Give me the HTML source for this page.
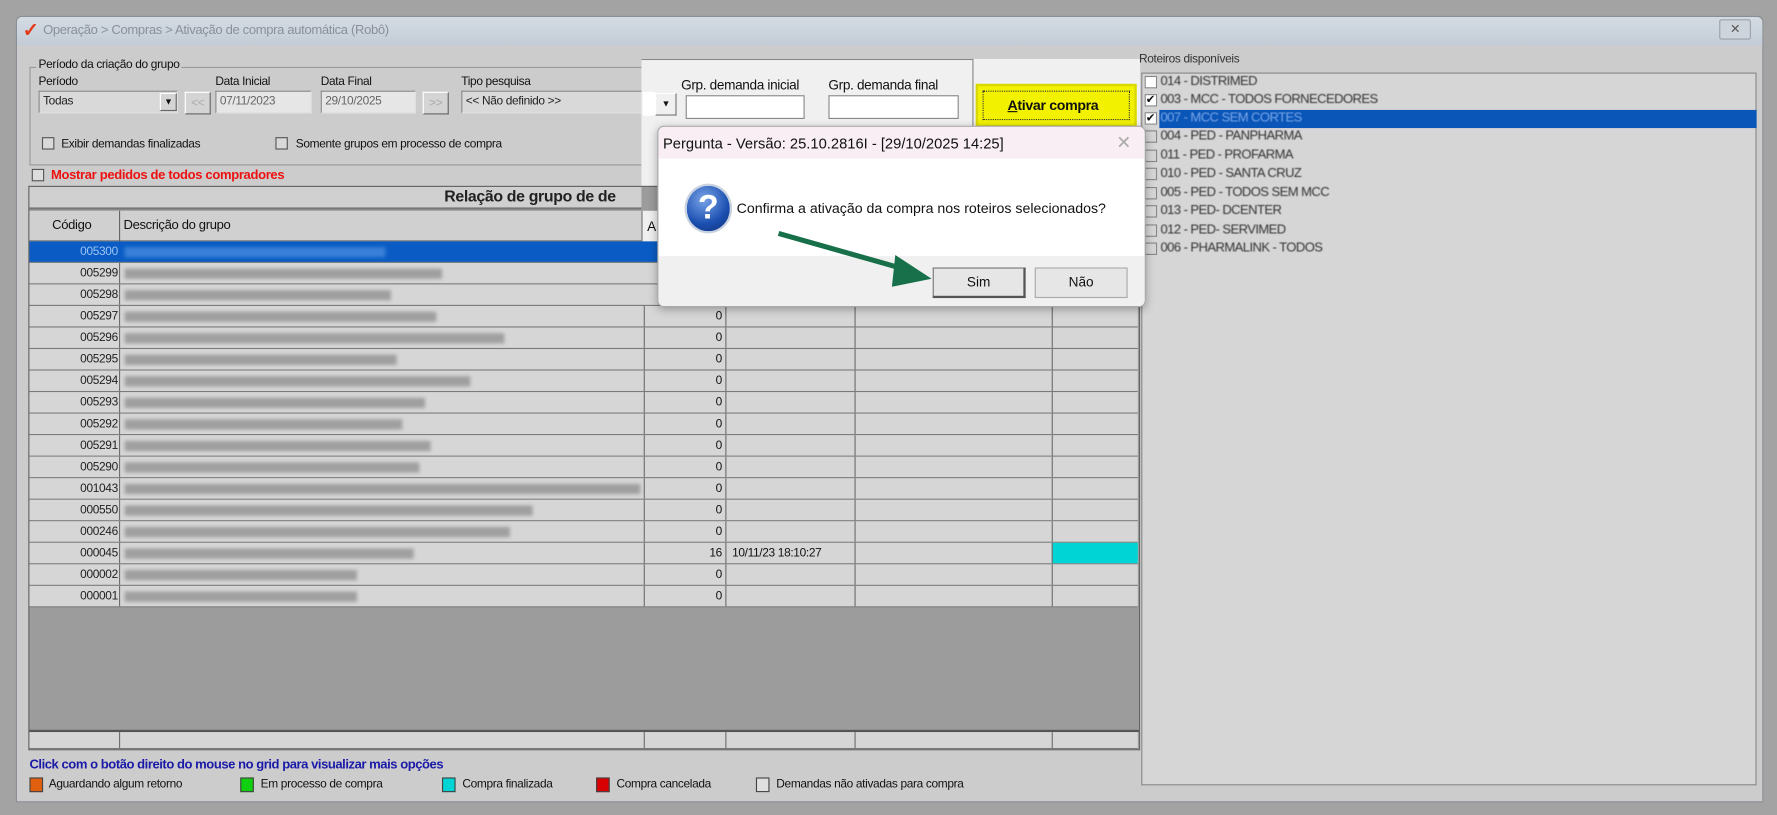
<!DOCTYPE html>
<html><head><meta charset="utf-8">
<style>
*{margin:0;padding:0;box-sizing:border-box}
body{width:1777px;height:815px;overflow:hidden;background:#a3a3a3;font-family:"Liberation Sans",sans-serif;}
#s{position:absolute;left:0;top:0;width:1568px;height:719px;transform:scale(1.13329);transform-origin:0 0;background:#a3a3a3;font-size:10.5px;letter-spacing:-0.3px;color:#111}
.a{position:absolute}
.win{left:14px;top:14px;width:1542px;height:694px;background:#cccccc;border:1px solid #8a8f96;border-radius:5px 5px 0 0}
.tb{left:15px;top:15px;width:1540px;height:25px;background:linear-gradient(#d4dbe3,#c3ccd6);border-radius:5px 5px 0 0}
.inp{background:#e6e6e6;border:1px solid #8a8a8a;border-right-color:#e0e0e0;border-bottom-color:#e0e0e0;height:20px;padding:2px 3px;color:#666}
.btn{background:#d4d4d4;border:1px solid #fff;border-right-color:#666;border-bottom-color:#666}
.cb{width:11px;height:11px;border:1px solid #555;background:#d9d9d9}
.row{position:absolute;left:26px;width:978px;height:19px;border-bottom:1px solid #7a7a7a;background:#d6d6d6}
.row .c{position:absolute;top:3px;left:0;width:78px;text-align:right;color:#222}
.row .b{position:absolute;top:5px;left:84px;height:9px;background:#888;filter:blur(1.6px);opacity:.7}
.row .n{position:absolute;top:3px;left:543px;width:68px;text-align:right}
.vl{position:absolute;top:0;width:1px;height:100%;background:#6e6e6e}
.li{position:absolute;left:1010px;height:16px;width:540px}
.li .cb{position:absolute;left:0;top:2px;background:#d6d6d6;border-color:#888}
.li span{position:absolute;left:14px;top:1px;font-size:11.5px;letter-spacing:-0.5px;color:#333;filter:blur(.5px)}
.lg{position:absolute;top:686px;width:12px;height:13px;border:1px solid #444}
</style></head><body>
<div id="s">
<div class="a win"></div>
<div class="a tb"></div>
<div class="a" style="left:20px;top:17px;font-size:17px;color:#e23b1a;font-weight:bold">✓</div>
<div class="a" style="left:38px;top:21px;font-size:11.5px;color:#8a9099">Operação &gt; Compras &gt; Ativação de compra automática (Robô)</div>
<div class="a" style="left:1517px;top:17px;width:28px;height:18px;border:1px solid #9aa2ac;border-radius:2px;background:#cdd4dc;text-align:center;font-size:11px;color:#555;line-height:16px">✕</div>
<div class="a" style="left:20px;top:41px;width:1533px;height:664px;background:#cccccc"></div>

<div class="a" style="left:26px;top:59px;width:540px;height:87px;border:1px solid #999;border-right:none"></div>
<div class="a" style="left:32px;top:51px;background:#cccccc;padding:0 2px">Período da criação do grupo</div>
<div class="a" style="left:34px;top:66px">Período</div>
<div class="a inp" style="left:34px;top:80px;width:123px;color:#222;background:#d9d9d9">Todas</div>
<div class="a btn" style="left:141px;top:82px;width:15px;height:16px;font-size:8px;text-align:center;line-height:14px">▼</div>
<div class="a btn" style="left:163px;top:81px;width:23px;height:20px;color:#aaa;text-align:center;line-height:18px">&lt;&lt;</div>
<div class="a" style="left:190px;top:66px">Data Inicial</div>
<div class="a inp" style="left:190px;top:80px;width:85px">07/11/2023</div>
<div class="a" style="left:283px;top:66px">Data Final</div>
<div class="a inp" style="left:283px;top:80px;width:84px">29/10/2025</div>
<div class="a btn" style="left:373px;top:81px;width:23px;height:20px;color:#aaa;text-align:center;line-height:18px">&gt;&gt;</div>
<div class="a" style="left:407px;top:66px">Tipo pesquisa</div>
<div class="a inp" style="left:407px;top:80px;width:160px;color:#222;background:#d9d9d9">&lt;&lt; Não definido &gt;&gt;</div>
<div class="a cb" style="left:37px;top:121px"></div><div class="a" style="left:54px;top:121px">Exibir demandas finalizadas</div>
<div class="a cb" style="left:243px;top:121px"></div><div class="a" style="left:261px;top:121px">Somente grupos em processo de compra</div>

<div class="a" style="left:566px;top:52px;width:440px;height:233px;background:#f0f0f0"></div>
<div class="a" style="left:566px;top:52px;width:293px;height:60px;border:1px solid #888;border-left:none;border-bottom:none"></div>
<div class="a btn" style="left:578px;top:82px;width:19px;height:20px;background:#f0f0f0;border-color:#fff #777 #777 #fff;font-size:8px;text-align:center;line-height:18px">▼</div>
<div class="a" style="left:567px;top:81px;width:11px;height:21px;background:#fff"></div>
<div class="a" style="left:601px;top:68px;font-size:12px">Grp. demanda inicial</div>
<div class="a" style="left:605px;top:84px;width:105px;height:21px;background:#fff;border:1px solid #888"></div>
<div class="a" style="left:731px;top:68px;font-size:12px">Grp. demanda final</div>
<div class="a" style="left:731px;top:84px;width:115px;height:21px;background:#fff;border:1px solid #888"></div>
<div class="a" style="left:861px;top:74px;width:142px;height:38px;background:#f2f200;border:2px solid #d8d800"></div>
<div class="a" style="left:867px;top:80px;width:130px;height:26px;border:1px dotted #333"></div>
<div class="a" style="left:889px;top:86px;font-size:12.5px;font-weight:bold"><u>A</u>tivar compra</div>

<div class="a cb" style="left:28px;top:149px;background:#ddd"></div>
<div class="a" style="left:45px;top:149px;color:#e11;font-weight:bold;font-size:11.5px">Mostrar pedidos de todos compradores</div>

<div class="a" style="left:25px;top:164px;width:981px;height:498px;background:#9c9c9c;border:1px solid #666"></div>
<div class="a" style="left:26px;top:165px;width:540px;height:20px;background:#d0d0d0;border-bottom:2px solid #777"></div>
<div class="a" style="left:392px;top:165px;font-size:14px;font-weight:bold;color:#222">Relação de grupo de de</div>
<div class="a" style="left:26px;top:186px;width:542px;height:27px;background:#d0d0d0;border-bottom:1px solid #777"></div>
<div class="a" style="left:105px;top:186px;width:1px;height:27px;background:#666"></div>
<div class="a" style="left:46px;top:193px;font-size:11.5px">Código</div>
<div class="a" style="left:109px;top:193px;font-size:11.5px">Descrição do grupo</div>
<div class="a" style="left:566px;top:186px;width:14px;height:27px;background:#f0f0f0;border-left:1px solid #777"></div>
<div class="a" style="left:571px;top:193px;font-size:12px">A</div>

<div class="row" style="top:213px;background:#0a5cc4"><div class="c" style="color:#9cc4f4">005300</div><div class="b" style="width:230px;background:#4d8fe0"></div><div class="vl" style="left:79px;background:#0a5cc4"></div></div>
<div class="row" style="top:232px"><div class="c">005299</div><div class="b" style="width:280px"></div><div class="vl" style="left:79px"></div></div>
<div class="row" style="top:251px"><div class="c">005298</div><div class="b" style="width:235px"></div><div class="vl" style="left:79px"></div></div>
<div class="row" style="top:270px"><div class="c">005297</div><div class="b" style="width:275px"></div><div class="vl" style="left:79px"></div><div class="n">0</div><div class="vl" style="left:542px"></div><div class="vl" style="left:614px"></div><div class="vl" style="left:728px"></div><div class="vl" style="left:902px"></div></div>
<div class="row" style="top:289px"><div class="c">005296</div><div class="b" style="width:335px"></div><div class="vl" style="left:79px"></div><div class="n">0</div><div class="vl" style="left:542px"></div><div class="vl" style="left:614px"></div><div class="vl" style="left:728px"></div><div class="vl" style="left:902px"></div></div>
<div class="row" style="top:308px"><div class="c">005295</div><div class="b" style="width:240px"></div><div class="vl" style="left:79px"></div><div class="n">0</div><div class="vl" style="left:542px"></div><div class="vl" style="left:614px"></div><div class="vl" style="left:728px"></div><div class="vl" style="left:902px"></div></div>
<div class="row" style="top:327px"><div class="c">005294</div><div class="b" style="width:305px"></div><div class="vl" style="left:79px"></div><div class="n">0</div><div class="vl" style="left:542px"></div><div class="vl" style="left:614px"></div><div class="vl" style="left:728px"></div><div class="vl" style="left:902px"></div></div>
<div class="row" style="top:346px"><div class="c">005293</div><div class="b" style="width:265px"></div><div class="vl" style="left:79px"></div><div class="n">0</div><div class="vl" style="left:542px"></div><div class="vl" style="left:614px"></div><div class="vl" style="left:728px"></div><div class="vl" style="left:902px"></div></div>
<div class="row" style="top:365px"><div class="c">005292</div><div class="b" style="width:245px"></div><div class="vl" style="left:79px"></div><div class="n">0</div><div class="vl" style="left:542px"></div><div class="vl" style="left:614px"></div><div class="vl" style="left:728px"></div><div class="vl" style="left:902px"></div></div>
<div class="row" style="top:384px"><div class="c">005291</div><div class="b" style="width:270px"></div><div class="vl" style="left:79px"></div><div class="n">0</div><div class="vl" style="left:542px"></div><div class="vl" style="left:614px"></div><div class="vl" style="left:728px"></div><div class="vl" style="left:902px"></div></div>
<div class="row" style="top:403px"><div class="c">005290</div><div class="b" style="width:260px"></div><div class="vl" style="left:79px"></div><div class="n">0</div><div class="vl" style="left:542px"></div><div class="vl" style="left:614px"></div><div class="vl" style="left:728px"></div><div class="vl" style="left:902px"></div></div>
<div class="row" style="top:422px"><div class="c">001043</div><div class="b" style="width:455px"></div><div class="vl" style="left:79px"></div><div class="n">0</div><div class="vl" style="left:542px"></div><div class="vl" style="left:614px"></div><div class="vl" style="left:728px"></div><div class="vl" style="left:902px"></div></div>
<div class="row" style="top:441px"><div class="c">000550</div><div class="b" style="width:360px"></div><div class="vl" style="left:79px"></div><div class="n">0</div><div class="vl" style="left:542px"></div><div class="vl" style="left:614px"></div><div class="vl" style="left:728px"></div><div class="vl" style="left:902px"></div></div>
<div class="row" style="top:460px"><div class="c">000246</div><div class="b" style="width:340px"></div><div class="vl" style="left:79px"></div><div class="n">0</div><div class="vl" style="left:542px"></div><div class="vl" style="left:614px"></div><div class="vl" style="left:728px"></div><div class="vl" style="left:902px"></div></div>
<div class="row" style="top:479px"><div class="c">000045</div><div class="b" style="width:255px"></div><div class="vl" style="left:79px"></div><div class="n">16</div><div class="a" style="left:620px;top:3px">10/11/23 18:10:27</div><div class="a" style="left:902px;top:0;width:76px;height:18px;background:#00d4d4"></div><div class="vl" style="left:542px"></div><div class="vl" style="left:614px"></div><div class="vl" style="left:728px"></div><div class="vl" style="left:902px"></div></div>
<div class="row" style="top:498px"><div class="c">000002</div><div class="b" style="width:205px"></div><div class="vl" style="left:79px"></div><div class="n">0</div><div class="vl" style="left:542px"></div><div class="vl" style="left:614px"></div><div class="vl" style="left:728px"></div><div class="vl" style="left:902px"></div></div>
<div class="row" style="top:517px"><div class="c">000001</div><div class="b" style="width:205px"></div><div class="vl" style="left:79px"></div><div class="n">0</div><div class="vl" style="left:542px"></div><div class="vl" style="left:614px"></div><div class="vl" style="left:728px"></div><div class="vl" style="left:902px"></div></div>
<div class="a" style="left:26px;top:644px;width:979px;height:2px;background:#555"></div>
<div class="row" style="top:646px;height:15px"><div class="vl" style="left:79px"></div><div class="vl" style="left:542px"></div><div class="vl" style="left:614px"></div><div class="vl" style="left:728px"></div><div class="vl" style="left:902px"></div></div>

<div class="a" style="left:26px;top:669px;color:#1a1aa8;font-weight:bold;font-size:11.5px;letter-spacing:-0.4px">Click com o botão direito do mouse no grid para visualizar mais opções</div>
<div class="lg" style="left:26px;background:#e06010"></div><div class="a" style="left:43px;top:686px">Aguardando algum retorno</div>
<div class="lg" style="left:212px;background:#10d010"></div><div class="a" style="left:230px;top:686px">Em processo de compra</div>
<div class="lg" style="left:390px;background:#00d4d4"></div><div class="a" style="left:408px;top:686px">Compra finalizada</div>
<div class="lg" style="left:526px;background:#d80000"></div><div class="a" style="left:544px;top:686px">Compra cancelada</div>
<div class="lg" style="left:667px;background:#e0e0e0"></div><div class="a" style="left:685px;top:686px">Demandas não ativadas para compra</div>

<div class="a" style="left:1005px;top:46px;color:#333">Roteiros disponíveis</div>
<div class="a" style="left:1007px;top:64px;width:543px;height:629px;background:#d6d6d6;border:1px solid #888"></div>
<div class="li" style="top:65px"><div class="cb" style="background:#fff"></div><span>014 - DISTRIMED</span></div>
<div class="li" style="top:81px"><div class="cb" style="background:#fff;font-size:10px;line-height:9px">✔</div><span>003 - MCC - TODOS FORNECEDORES</span></div>
<div class="li" style="top:97px"><div class="cb" style="background:#fff;font-size:10px;line-height:9px">✔</div><div class="a" style="left:13px;top:0;width:527px;height:16px;background:#0a55b8"></div><span style="color:#7aa8e8">007 - MCC SEM CORTES</span></div>
<div class="li" style="top:113px"><div class="cb"></div><span>004 - PED - PANPHARMA</span></div>
<div class="li" style="top:130px"><div class="cb"></div><span>011 - PED - PROFARMA</span></div>
<div class="li" style="top:146px"><div class="cb"></div><span>010 - PED - SANTA CRUZ</span></div>
<div class="li" style="top:163px"><div class="cb"></div><span>005 - PED - TODOS SEM MCC</span></div>
<div class="li" style="top:179px"><div class="cb"></div><span>013 - PED- DCENTER</span></div>
<div class="li" style="top:196px"><div class="cb"></div><span>012 - PED- SERVIMED</span></div>
<div class="li" style="top:212px"><div class="cb"></div><span>006 - PHARMALINK - TODOS</span></div>

<div class="a" style="left:580px;top:111px;width:431px;height:160px;background:#fff;border:1px solid #aaa;border-radius:6px;box-shadow:0 2px 8px rgba(0,0,0,.3);overflow:hidden;letter-spacing:0">
 <div class="a" style="left:0;top:0;width:431px;height:28px;background:#f8eef3"></div>
 <div class="a" style="left:4px;top:7px;font-size:13px;color:#111">Pergunta - Versão: 25.10.2816I - [29/10/2025 14:25]</div>
 <div class="a" style="left:404px;top:4px;font-size:16px;color:#aaa">✕</div>
 <div class="a" style="left:0;top:114px;width:431px;height:46px;background:#f0f0f0"></div>
 <div class="a" style="left:23px;top:50px;width:42px;height:44px;border-radius:50%;background:radial-gradient(circle at 40% 30%,#7aa4e8,#1b4fb0 60%,#0f2f78);border:2px solid #c8d2e0;color:#fff;font-size:30px;font-weight:bold;text-align:center;line-height:40px">?</div>
 <div class="a" style="left:69px;top:65px;font-size:12.5px;color:#111">Confirma a ativação da compra nos roteiros selecionados?</div>
 <div class="a" style="left:242px;top:124px;width:82px;height:27px;background:#e6e6e6;border:1px solid #777;border-right:2px solid #555;border-bottom:2px solid #555;text-align:center;line-height:24px;font-size:12px">Sim</div>
 <div class="a" style="left:332px;top:124px;width:82px;height:27px;background:#e6e6e6;border:1px solid #aaa;text-align:center;line-height:25px;font-size:12px">Não</div>
</div>
<svg class="a" style="left:0;top:0" width="1568" height="719">
 <line x1="687" y1="206" x2="800" y2="238" stroke="#17704a" stroke-width="4.5"/>
 <polygon points="790,225 822,246 787,253" fill="#17704a"/>
</svg>
</div>
</body></html>
